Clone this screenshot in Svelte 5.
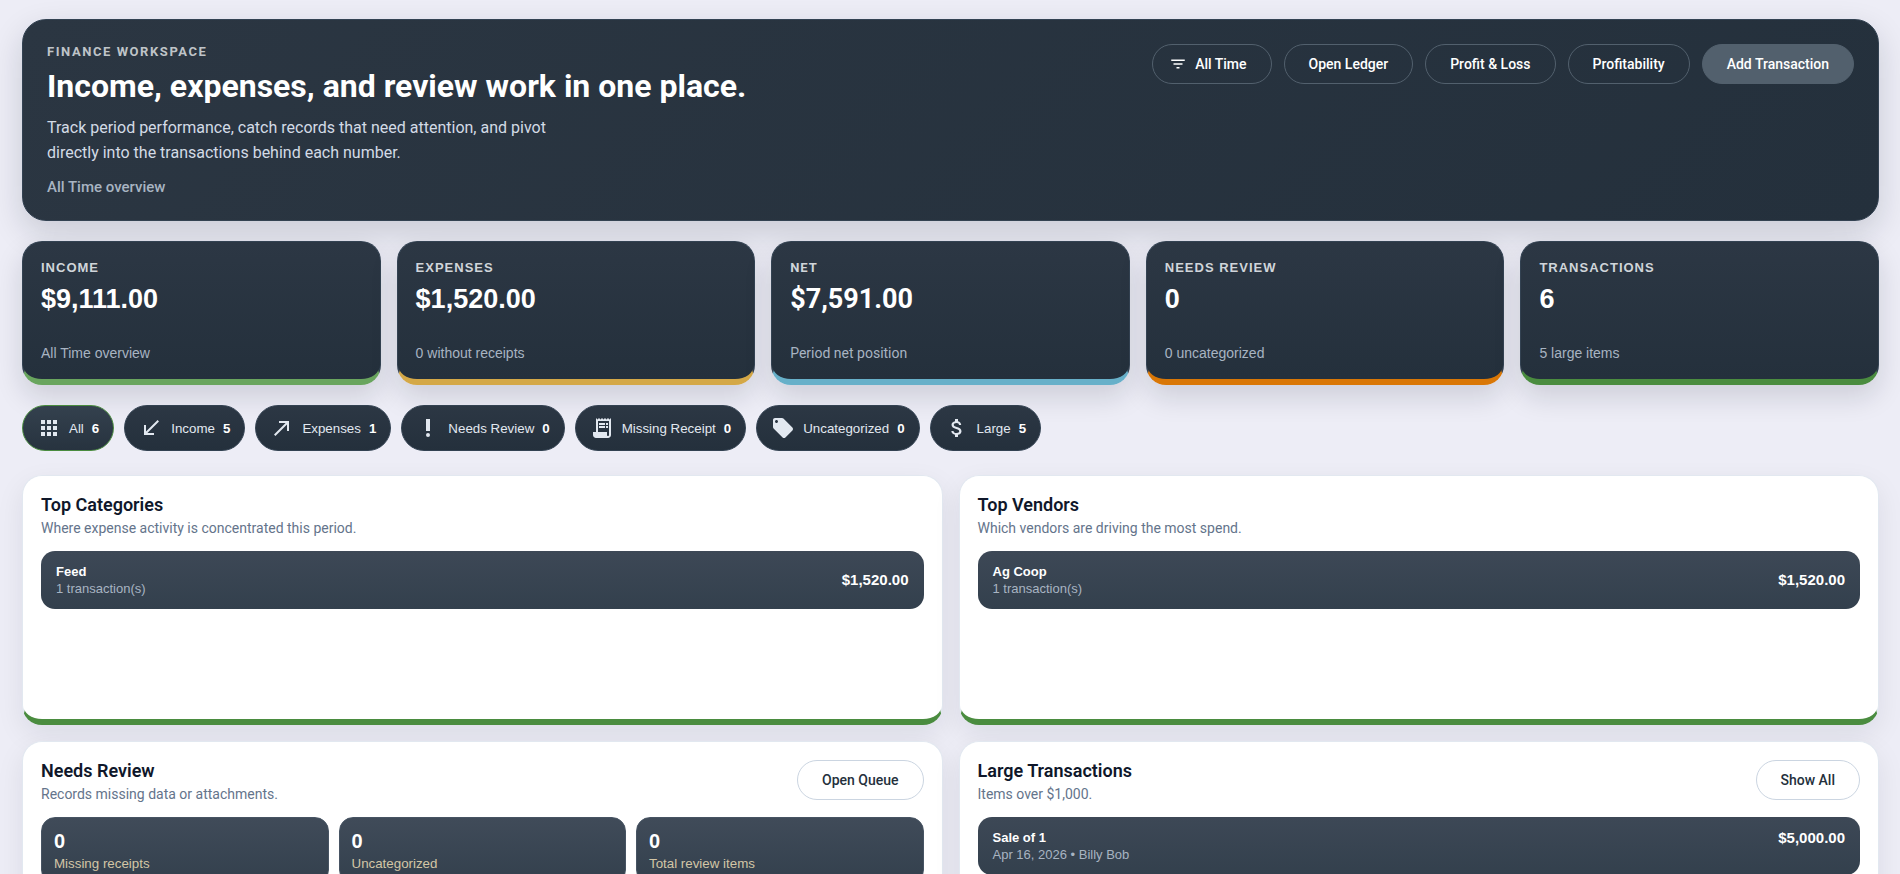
<script>
  const actions = ['Open Ledger', 'Profit & Loss', 'Profitability'];

  const stats = [
    { label: 'Income', value: '$9,111.00', note: 'All Time overview', tone: 'income' },
    { label: 'Expenses', value: '$1,520.00', note: '0 without receipts', tone: 'expenses' },
    { label: 'Net', value: '$7,591.00', note: 'Period net position', tone: 'net' },
    { label: 'Needs Review', value: '0', note: '0 uncategorized', tone: 'review' },
    { label: 'Transactions', value: '6', note: '5 large items', tone: 'transactions' }
  ];

  const filters = [
    { label: 'All', count: 6, icon: 'M4 8h4V4H4v4zm6 12h4v-4h-4v4zm-6 0h4v-4H4v4zm0-6h4v-4H4v4zm6 0h4v-4h-4v4zm6-10v4h4V4h-4zm-6 4h4V4h-4v4zm6 6h4v-4h-4v4zm0 6h4v-4h-4v4z' },
    { label: 'Income', count: 5, icon: 'M20 5.41L18.59 4 7 15.59V9H5v10h10v-2H8.41z' },
    { label: 'Expenses', count: 1, icon: 'M9 5v2h6.59L4 18.59 5.41 20 17 8.41V15h2V5z' },
    { label: 'Needs Review', count: 0, icon: 'M12 17a2 2 0 1 0 0 4 2 2 0 0 0 0-4zM10 3h4v12h-4z' },
    { label: 'Missing Receipt', count: 0, icon: 'M19.5 3.5L18 2l-1.5 1.5L15 2l-1.5 1.5L12 2l-1.5 1.5L9 2 7.5 3.5 6 2v14H3v3c0 1.66 1.34 3 3 3h12c1.66 0 3-1.34 3-3V2l-1.5 1.5zM19 19c0 .55-.45 1-1 1s-1-.45-1-1v-3H8V5h11v14zM9 7h6v2H9zm7 0h2v2h-2zm-7 3h6v2H9zm7 0h2v2h-2z' },
    { label: 'Uncategorized', count: 0, icon: 'M21.41 11.58l-9-9C12.05 2.22 11.55 2 11 2H4c-1.1 0-2 .9-2 2v7c0 .55.22 1.05.59 1.42l9 9c.36.36.86.58 1.41.58.55 0 1.05-.22 1.41-.59l7-7c.37-.36.59-.86.59-1.41 0-.55-.23-1.06-.59-1.42zM5.5 7C4.67 7 4 6.33 4 5.5S4.67 4 5.5 4 7 4.67 7 5.5 6.33 7 5.5 7z' },
    { label: 'Large', count: 5, icon: 'M11.8 10.9c-2.27-.59-3-1.2-3-2.15 0-1.09 1.01-1.85 2.7-1.85 1.78 0 2.44.85 2.5 2.1h2.21c-.07-1.72-1.12-3.3-3.21-3.81V3h-3v2.16c-1.94.42-3.5 1.68-3.5 3.61 0 2.31 1.91 3.46 4.7 4.13 2.5.6 3 1.48 3 2.41 0 .69-.49 1.79-2.7 1.79-2.06 0-2.87-.92-2.98-2.1h-2.2c.12 2.19 1.76 3.42 3.68 3.83V21h3v-2.15c1.95-.37 3.5-1.5 3.5-3.55 0-2.84-2.43-3.81-4.7-4.4z' }
  ];

  const reviewTiles = [
    { label: 'Missing receipts', value: 0 },
    { label: 'Uncategorized', value: 0 },
    { label: 'Total review items', value: 0 }
  ];

  let selected = $state('All');
</script>

<main class="finance-page">
  <header class="hero">
    <div class="hero-copy">
      <p class="eyebrow">Finance Workspace</p>
      <h1>Income, expenses, and review work in one place.</h1>
      <p class="lead">Track period performance, catch records that need attention, and pivot directly into the transactions behind each number.</p>
      <p class="period">All Time overview</p>
    </div>
    <nav class="hero-actions" aria-label="Finance actions">
      <button type="button" class="pill with-icon">
        <svg viewBox="0 0 24 24" aria-hidden="true"><path d="M10 18h4v-2h-4v2zM3 6v2h18V6H3zm3 7h12v-2H6v2z" /></svg>
        All Time
      </button>
      {#each actions as action}
        <button type="button" class="pill">{action}</button>
      {/each}
      <button type="button" class="pill filled">Add Transaction</button>
    </nav>
  </header>

  <section class="stats" aria-label="Summary">
    {#each stats as stat}
      {#if stat.tone === 'net'}
        <div class="stat {stat.tone}">
          <span class="stat-label">{stat.label}</span>
          <strong>{stat.value}</strong>
          <small>{stat.note}</small>
        </div>
      {:else}
        <button type="button" class="stat {stat.tone}">
          <span class="stat-label">{stat.label}</span>
          <strong>{stat.value}</strong>
          <small>{stat.note}</small>
        </button>
      {/if}
    {/each}
  </section>

  <section class="filters" aria-label="Filters">
    {#each filters as filter}
      <button
        type="button"
        class="chip"
        class:active={selected === filter.label}
        aria-pressed={selected === filter.label}
        onclick={() => (selected = filter.label)}
      >
        <svg viewBox="0 0 24 24" aria-hidden="true"><path d={filter.icon} /></svg>
        <span>{filter.label}</span>
        <strong>{filter.count}</strong>
      </button>
    {/each}
  </section>

  <div class="panels">
    <section class="panel">
      <div class="panel-header">
        <div>
          <h2>Top Categories</h2>
          <p>Where expense activity is concentrated this period.</p>
        </div>
      </div>
      <button type="button" class="row">
        <span class="row-copy"><strong>Feed</strong><small>1 transaction(s)</small></span>
        <span class="amount">$1,520.00</span>
      </button>
    </section>

    <section class="panel">
      <div class="panel-header">
        <div>
          <h2>Top Vendors</h2>
          <p>Which vendors are driving the most spend.</p>
        </div>
      </div>
      <button type="button" class="row">
        <span class="row-copy"><strong>Ag Coop</strong><small>1 transaction(s)</small></span>
        <span class="amount">$1,520.00</span>
      </button>
    </section>

    <section class="panel">
      <div class="panel-header">
        <div>
          <h2>Needs Review</h2>
          <p>Records missing data or attachments.</p>
        </div>
        <button type="button" class="pill light">Open Queue</button>
      </div>
      <div class="tiles">
        {#each reviewTiles as tile}
          <button type="button" class="tile">
            <strong>{tile.value}</strong>
            <span>{tile.label}</span>
          </button>
        {/each}
      </div>
    </section>

    <section class="panel">
      <div class="panel-header">
        <div>
          <h2>Large Transactions</h2>
          <p>Items over $1,000.</p>
        </div>
        <button type="button" class="pill light">Show All</button>
      </div>
      <button type="button" class="row top">
        <span class="row-copy"><strong>Sale of 1</strong><small>Apr 16, 2026 • Billy Bob</small></span>
        <span class="amount">$5,000.00</span>
      </button>
    </section>
  </div>
</main>

<style>
  :global(body) {
    background: #ededf6;
  }

  .finance-page {
    box-sizing: border-box;
    color: #0f172a;
    display: grid;
    font-family: Roboto, "Liberation Sans", sans-serif;
    padding: 19px 21px 24px 22px;
  }

  .finance-page * {
    box-sizing: border-box;
  }

  h1,
  h2,
  p {
    margin: 0;
  }

  button {
    cursor: pointer;
    font-family: "Liberation Sans", Arial, sans-serif;
  }

  .hero {
    align-items: flex-start;
    background: linear-gradient(135deg, #2b3642, #24303c);
    border: 1px solid #334252;
    border-radius: 24px;
    box-shadow: 0 12px 32px rgba(15, 23, 42, 0.16);
    color: #fff;
    display: flex;
    gap: 24px;
    justify-content: space-between;
    padding: 24px 24px 23px;
  }

  .eyebrow {
    color: #bfc4c8;
    font-size: 13px;
    font-weight: 700;
    letter-spacing: 0.12em;
    line-height: 16px;
    text-transform: uppercase;
  }

  h1 {
    font-size: 32px;
    font-weight: 700;
    line-height: 36px;
    margin-top: 8px;
  }

  .lead {
    color: #d3dbe6;
    font-size: 16px;
    line-height: 25px;
    margin-top: 11px;
    max-width: 520px;
  }

  .period {
    color: #a8b4c2;
    font-size: 15px;
    font-weight: 500;
    line-height: 20px;
    margin-top: 12px;
  }

  .hero-actions {
    display: flex;
    flex-wrap: wrap;
    gap: 12px;
  }

  .pill {
    align-items: center;
    background: transparent;
    border: 1px solid #52606d;
    border-radius: 20px;
    color: #fff;
    display: inline-flex;
    flex: none;
    font: 500 14px/20px Roboto, "Liberation Sans", sans-serif;
    gap: 8px;
    height: 40px;
    padding: 0 24px;
  }

  .pill.with-icon {
    padding-left: 16px;
  }

  .pill svg {
    fill: currentColor;
    height: 18px;
    width: 18px;
  }

  .pill.filled {
    background: #52606d;
  }

  .pill.light {
    border-color: #cbd5e1;
    color: #24303c;
  }

  .stats {
    display: grid;
    gap: 16px;
    grid-template-columns: repeat(5, 1fr);
    margin-top: 20px;
  }

  .stat {
    background: linear-gradient(180deg, #2c3744, #24303c);
    border: 1px solid #334252;
    border-bottom: 6px solid #4a8c3f;
    border-radius: 20px;
    box-shadow: 0 12px 28px rgba(15, 23, 42, 0.14);
    color: #fff;
    display: flex;
    flex-direction: column;
    min-height: 144px;
    padding: 18px;
    text-align: left;
  }

  .stat-label {
    color: #d0d5da;
    font-size: 13px;
    font-weight: 700;
    letter-spacing: 1px;
    line-height: 16px;
    text-transform: uppercase;
  }

  .stat strong {
    font-size: 27px;
    line-height: 32px;
    margin-top: 7px;
  }

  .stat small {
    color: #a8b4c2;
    font-size: 14px;
    line-height: 16px;
    margin-top: auto;
  }

  .stat.income {
    border-bottom-color: #69a55e;
  }

  .stat.expenses {
    border-bottom-color: #d4a847;
  }

  .stat.net {
    border-bottom-color: #67b0c9;
  }

  .stat.review {
    border-bottom-color: #d97706;
  }

  .filters {
    display: flex;
    flex-wrap: wrap;
    gap: 10px;
    margin-top: 20px;
  }

  .chip {
    align-items: center;
    background: linear-gradient(180deg, #2c3744, #24303c);
    border: 1px solid #334252;
    border-radius: 23px;
    color: #e2e8f0;
    display: inline-flex;
    gap: 8px;
    height: 46px;
    padding: 0 14px;
  }

  .chip.active {
    background: linear-gradient(180deg, #34414e, #27333f);
    border-color: #4a8c3f;
  }

  .chip svg {
    fill: currentColor;
    height: 24px;
    width: 24px;
  }

  .chip strong {
    color: #fff;
  }

  .panels {
    display: grid;
    gap: 16px;
    grid-template-columns: 1fr 1fr;
    margin-top: 24px;
  }

  .panel {
    background: #fff;
    border: 1px solid #e2e8f0;
    border-bottom: 6px solid #4a8c3f;
    border-radius: 20px;
    box-shadow: 0 10px 28px rgba(15, 23, 42, 0.08);
    min-height: 250px;
    padding: 18px;
  }

  .panel-header {
    align-items: flex-start;
    display: flex;
    justify-content: space-between;
    margin-bottom: 14px;
    min-height: 43px;
  }

  h2 {
    font-size: 18px;
    font-weight: 600;
    line-height: 21px;
  }

  .panel-header p {
    color: #64748b;
    font-size: 14px;
    line-height: 18px;
    margin-top: 4px;
  }

  .row {
    align-items: center;
    background: linear-gradient(180deg, #3d4856, #33404d);
    border: 0;
    border-radius: 14px;
    color: #fff;
    display: flex;
    justify-content: space-between;
    padding: 12px 15px;
    text-align: left;
    width: 100%;
  }

  .row.top {
    align-items: flex-start;
  }

  .row-copy {
    display: grid;
    font-size: 13px;
    line-height: 17px;
  }

  .row-copy small {
    color: #a8b4c2;
    font-size: 13px;
  }

  .amount {
    font-size: 15px;
    font-weight: 700;
    line-height: 18px;
  }

  .tiles {
    display: grid;
    gap: 10px;
    grid-template-columns: repeat(3, 1fr);
  }

  .tile {
    background: linear-gradient(180deg, #404b59, #33404d);
    border: 1px solid #475463;
    border-radius: 14px;
    color: #fff;
    display: grid;
    gap: 3px;
    padding: 12px;
    text-align: left;
  }

  .tile strong {
    font-size: 20px;
    line-height: 23px;
  }

  .tile span {
    color: #d3c6a6;
    line-height: 15px;
  }
</style>
